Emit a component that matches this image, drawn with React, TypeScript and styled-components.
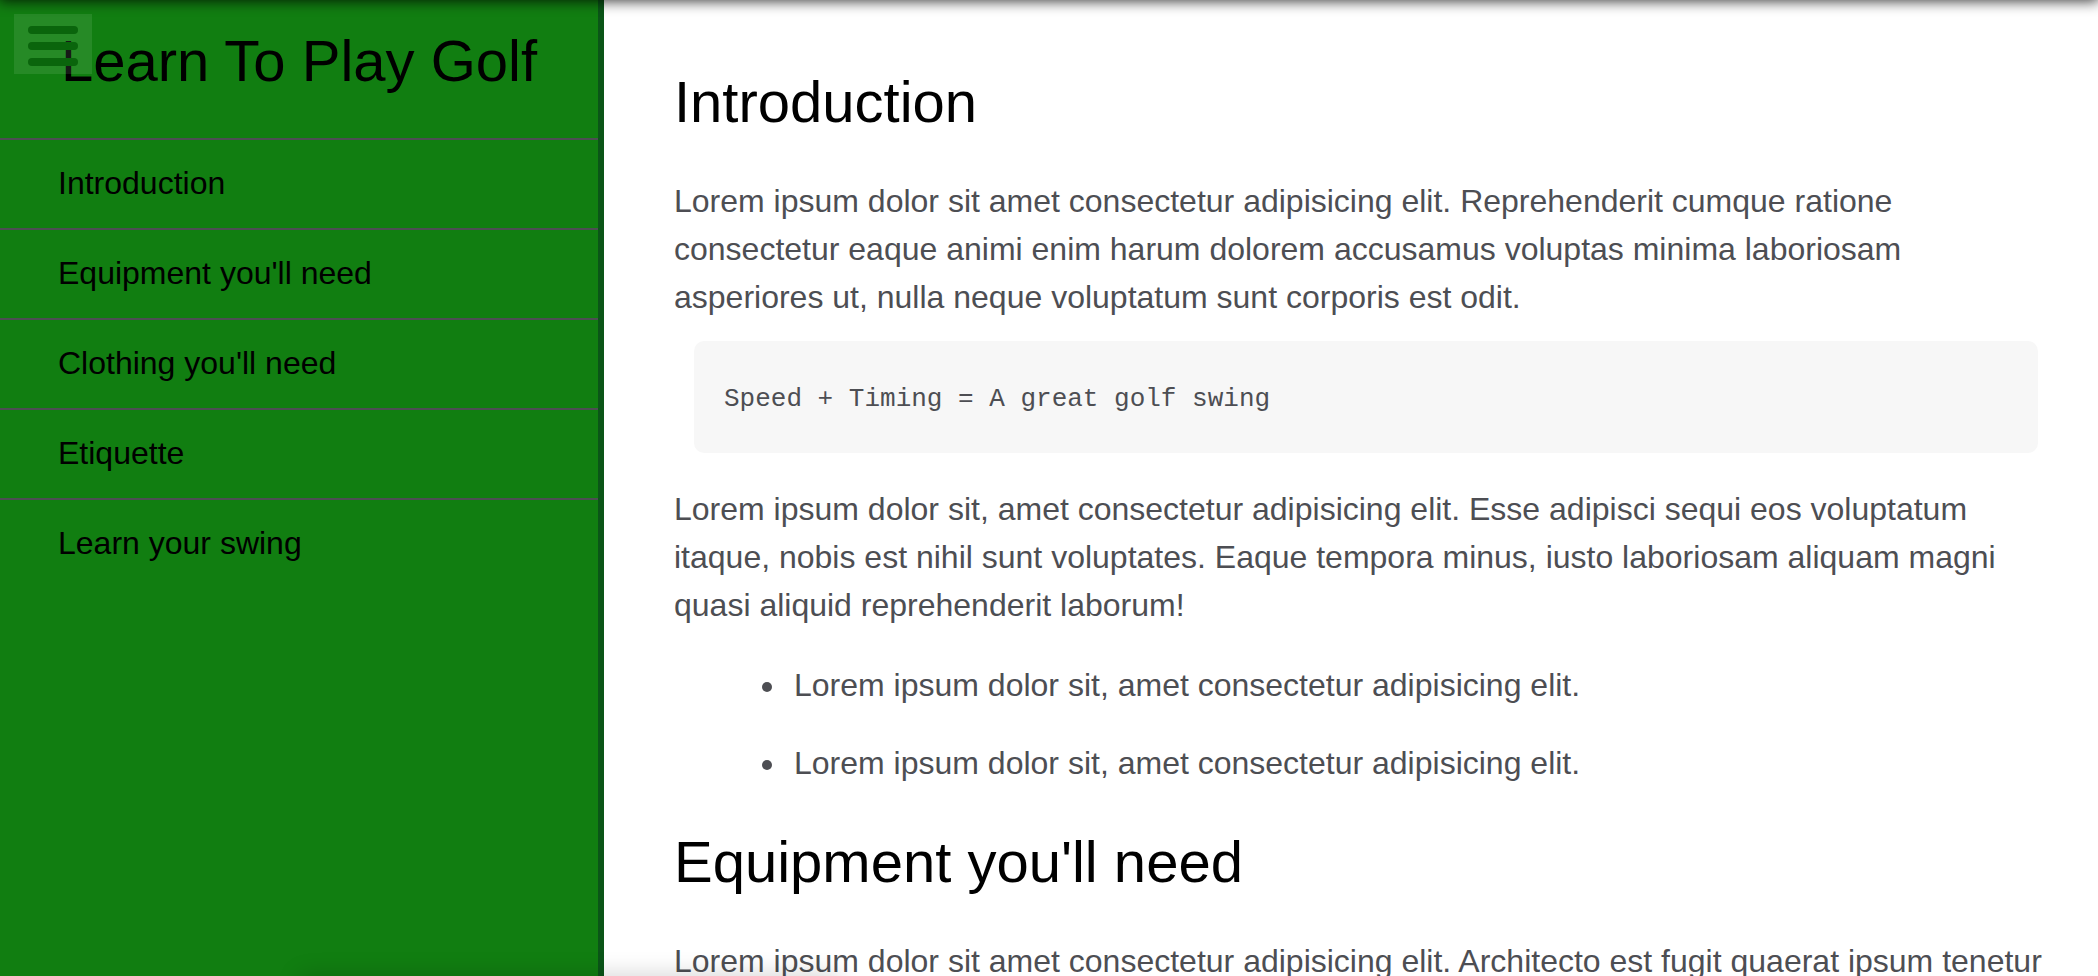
import React from "react";
import styled, { createGlobalStyle } from "styled-components";

const Global = createGlobalStyle`
  * { box-sizing: border-box; }
  body {
    margin: 0;
    background: #fff;
    color: #4d4e53;
    font: 32px/48px "Liberation Sans", Arial, sans-serif;
  }
  h1, h2, p, ul, pre { margin: 0; }
`;

const Page = styled.div`
  position: relative;
  display: flex;
  height: 100vh;
  overflow: hidden;
`;

const Sidebar = styled.nav`
  flex: none;
  width: 604px;
  background: #117e11;
  border-right: 6px solid #0b5518;
  color: #000;
`;

const Title = styled.h1`
  padding: 22px 0 38px;
  font-size: 58px;
  font-weight: 400;
  line-height: 78px;
  text-align: center;
  white-space: nowrap;
`;

const NavList = styled.ul`
  padding: 0;
  list-style: none;
`;

const NavLink = styled.a`
  display: block;
  padding: 19px 58px 21px;
  border-top: 2px solid #4d4e53;
  color: #000;
  text-decoration: none;
`;

const MenuButton = styled.button`
  position: absolute;
  top: 14px;
  left: 14px;
  display: flex;
  flex-direction: column;
  gap: 8px;
  width: 78px;
  height: 60px;
  padding: 12px 14px 8px;
  border: 0;
  background: rgba(208, 236, 208, 0.11);
`;

const Bar = styled.span`
  flex: none;
  height: 8px;
  border-radius: 4px;
  background: #0a650c;
`;

const Main = styled.main`
  flex: 1;
  min-width: 0;
  padding: 64px 48px 0 70px;
`;

const Heading = styled.h2`
  padding-bottom: 37px;
  color: #000;
  font-size: 58px;
  font-weight: 400;
  line-height: 76px;
`;

const Section = styled.section`
  padding-bottom: 7px;
`;

const Code = styled.pre`
  margin: 20px 12px 32px 20px;
  padding: 34px 30px 30px;
  border-radius: 10px;
  background: #f7f7f7;
  font: 26px/48px "Liberation Mono", "Courier New", monospace;
`;

const Bullets = styled.ul`
  padding: 32px 0 0 120px;
  list-style: none;
`;

const Bullet = styled.li`
  padding-bottom: 30px;

  &::before {
    content: "";
    display: inline-block;
    width: 10px;
    height: 10px;
    margin: 0 22px 0 -32px;
    border-radius: 50%;
    background: #4d4e53;
    vertical-align: 4px;
  }
`;

const TopShadow = styled.div`
  position: absolute;
  top: -20px;
  left: 0;
  right: 0;
  height: 20px;
  box-shadow: 0 0 14px 1px rgba(0, 0, 0, 0.8);
  pointer-events: none;
`;

const BottomShadow = styled.div`
  position: absolute;
  bottom: -20px;
  left: 300px;
  width: 540px;
  height: 20px;
  box-shadow: 0 0 24px rgba(0, 0, 0, 0.2);
  pointer-events: none;
`;

const links = [
  ["introduction", "Introduction"],
  ["equipment", "Equipment you'll need"],
  ["clothing", "Clothing you'll need"],
  ["etiquette", "Etiquette"],
  ["swing", "Learn your swing"],
];

export default function App() {
  return (
    <Page>
      <Global />
      <Sidebar>
        <Title>Learn To Play Golf</Title>
        <NavList>
          {links.map(([id, label]) => (
            <li key={id}>
              <NavLink href={`#${id}`}>{label}</NavLink>
            </li>
          ))}
        </NavList>
      </Sidebar>
      <MenuButton type="button" aria-label="Menu">
        <Bar />
        <Bar />
        <Bar />
      </MenuButton>
      <Main>
        <Section id="introduction">
          <Heading>Introduction</Heading>
          <p>
            Lorem ipsum dolor sit amet consectetur adipisicing elit. Reprehenderit cumque ratione
            consectetur eaque animi enim harum dolorem accusamus voluptas minima laboriosam
            asperiores ut, nulla neque voluptatum sunt corporis est odit.
          </p>
          <Code>Speed + Timing = A great golf swing</Code>
          <p>
            Lorem ipsum dolor sit, amet consectetur adipisicing elit. Esse adipisci sequi eos
            voluptatum itaque, nobis est nihil sunt voluptates. Eaque tempora minus, iusto
            laboriosam aliquam magni quasi aliquid reprehenderit laborum!
          </p>
          <Bullets>
            <Bullet>Lorem ipsum dolor sit, amet consectetur adipisicing elit.</Bullet>
            <Bullet>Lorem ipsum dolor sit, amet consectetur adipisicing elit.</Bullet>
          </Bullets>
        </Section>
        <Section id="equipment">
          <Heading>Equipment you'll need</Heading>
          <p>Lorem ipsum dolor sit amet consectetur adipisicing elit. Architecto est fugit quaerat ipsum tenetur</p>
        </Section>
      </Main>
      <TopShadow />
      <BottomShadow />
    </Page>
  );
}
